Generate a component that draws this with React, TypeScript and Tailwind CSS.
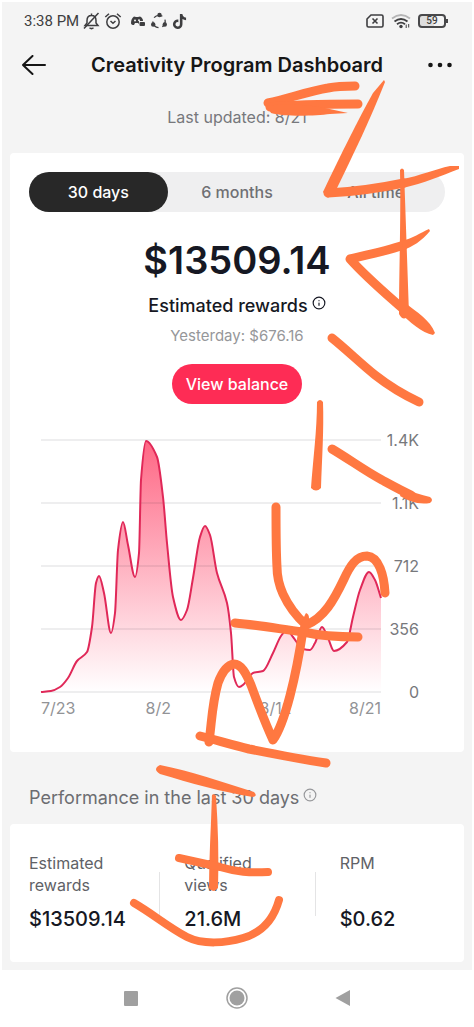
import { Info } from "lucide-react";
import { FaTiktok } from "react-icons/fa";
import { useState } from "react";

type Point = [number, number];

const PERIODS = ["30 days", "6 months", "All time"];
const Y_LABELS = ["1.4K", "1.1K", "712", "356", "0"];

const STATS = [
  { label: "Estimated rewards", value: "$13509.14" },
  { label: "Qualified views", value: "21.6M" },
  { label: "RPM", value: "$0.62" },
];

const CHART_WIDTH = 340;
const CHART_HEIGHT = 252;

const REWARDS: Point[] = [
  [0, 252], [10, 251], [19, 247], [27, 238], [36, 221], [46, 212], [51, 187],
  [55, 143], [58, 136], [63, 153], [70, 193], [74, 173], [77, 110], [82, 82],
  [87, 105], [94, 137], [98, 113], [100, 40], [105, 1], [116, 17], [122, 57],
  [126, 103], [132, 157], [140, 180], [146, 170], [152, 138], [159, 97],
  [164, 86], [169, 95], [176, 133], [186, 163], [190, 193], [193, 237],
  [198, 247], [203, 244], [212, 233], [222, 231], [232, 213], [240, 196],
  [246, 190], [252, 197], [262, 209], [269, 210], [274, 203], [281, 187],
  [287, 198], [293, 211], [306, 202], [312, 177], [319, 150], [328, 132],
  [334, 140], [340, 158],
];

// cubic curve through the points, flat at every peak and valley
function smoothPath(points: Point[]) {
  const last = points.length - 1;
  const slopes = points.map((_, i) => {
    const a = points[Math.max(i - 1, 0)];
    const b = points[i];
    const c = points[Math.min(i + 1, last)];
    if (i === 0 || i === last) return (c[1] - a[1]) / (c[0] - a[0]);
    const before = (b[1] - a[1]) / (b[0] - a[0]);
    const after = (c[1] - b[1]) / (c[0] - b[0]);
    return before * after <= 0 ? 0 : (2 * before * after) / (before + after);
  });
  let d = `M${points[0][0]} ${points[0][1]}`;
  for (let i = 0; i < last; i++) {
    const [x1, y1] = points[i];
    const [x2, y2] = points[i + 1];
    const dx = (x2 - x1) / 3;
    d += ` C${x1 + dx} ${y1 + slopes[i] * dx} ${x2 - dx} ${y2 - slopes[i + 1] * dx} ${x2} ${y2}`;
  }
  return d;
}

function App() {
  return (
    <div className="relative min-h-screen bg-white pt-0.5 font-['Inter','Noto_Sans',sans-serif] text-[#161823]">
      <main className="mx-0.5 bg-[#f4f4f4] px-2 pb-2">
        <StatusBar />
        <Header />
        <p className="mt-[15px] text-center text-base leading-6 text-[#77787c]">
          Last updated: 8/21
        </p>
        <RewardsCard />
        <h2 className="mt-8 flex gap-1 px-[19px] text-lg leading-7 text-[#6c6d71]">
          Performance in the last 30 days
          <Info size={14} className="mt-1 text-[#97989b]" />
        </h2>
        <StatsCard />
      </main>
      <NavigationBar />
      <Scribble />
    </div>
  );
}

function StatusBar() {
  return (
    <div className="flex h-[38px] items-center justify-between pr-4 pl-3.5 font-['Roboto',sans-serif] text-[#3e3e40]">
      <div className="flex items-center gap-1">
        <span className="text-[15px]">3:38 PM</span>
        {/* muted bell */}
        <svg width="17" height="18" viewBox="0 0 17 18" fill="none" stroke="currentColor" strokeWidth="1.5">
          <path d="M2 13.500L4 11V8.500C4 5.500 5.500 3.500 8.500 3.500S13 5.500 13 8.500V11L15 13.500ZM8.500 3.500V1.500" />
          <path d="M6.500 15.800Q8.500 17.500 10.500 15.800M15.500 1L1 16.500" />
        </svg>
        {/* alarm */}
        <svg width="18" height="18" viewBox="0 0 18 18" fill="none" stroke="currentColor" strokeWidth="1.5">
          <circle cx="9" cy="10" r="6.200" />
          <path d="M6.500 9L9 11.300L11.500 9M1.300 5L5 1.800M16.700 5L13 1.800" />
        </svg>
        {/* gamepad */}
        <svg width="16" height="14" viewBox="0 0 16 14" fill="currentColor" className="ml-1">
          <path d="M4 2.500L6 3H8L10 2.500Q13 4 13 7H9V10L8 9H5L4 11Q1 11 1 9Q1 4.500 4 2.500Z" />
          <rect x="9.500" y="8" width="5.500" height="4" rx="1" />
          <circle cx="5" cy="6.500" r="1" fill="#f4f4f4" />
          <circle cx="9" cy="6.300" r="1" fill="#f4f4f4" />
        </svg>
        {/* share ring */}
        <svg width="18" height="18" viewBox="0 0 18 18">
          <circle cx="9" cy="9.500" r="6.200" fill="none" stroke="currentColor" strokeWidth="1.300" strokeDasharray="9 4" strokeDashoffset="3" />
          <circle cx="9.500" cy="3" r="2.200" fill="currentColor" />
          <circle cx="3.200" cy="12.500" r="2.200" fill="currentColor" />
          <circle cx="14.800" cy="12.500" r="2.200" fill="currentColor" />
        </svg>
        <FaTiktok size={15} />
      </div>
      <div className="flex items-center gap-[7px]">
        <svg width="18" height="14" viewBox="0 0 18 14" fill="none" stroke="currentColor" strokeWidth="1.6">
          <path d="M5 1H15.500Q17 1 17 2.500V11.500Q17 13 15.500 13H2.500Q1 13 1 11.500V5Z" />
          <path d="M6.500 4.500L11.500 9.500M11.500 4.500L6.500 9.500" />
        </svg>
        <svg width="20" height="15" viewBox="0 0 20 15" fill="none" strokeWidth="1.800">
          <path d="M1 4.500Q10 -2.500 19 4.500" stroke="#b5b5b6" />
          <path d="M3.500 7.500Q10 2.500 16.500 7.500M6 10.300Q10 7 14 10.300" stroke="currentColor" />
          <circle cx="10" cy="12.500" r="1.700" fill="currentColor" />
          <path d="M15.200 14V10.500M17.700 10V13.500" stroke="currentColor" strokeWidth="1" />
        </svg>
        <div className="flex items-center">
          <span className="flex h-3.5 w-7 items-center justify-center rounded border-2 border-[#48484a] bg-linear-to-r from-[#dedede] from-60% to-[#f4f4f4] to-60% text-[10px] leading-3 font-medium">
            59
          </span>
          <span className="h-1 w-0.5 bg-[#48484a]" />
        </div>
      </div>
    </div>
  );
}

function Header() {
  return (
    <header className="flex h-[50px] items-center justify-between px-3 text-[#161616]">
      <button aria-label="Back">
        <svg width="24" height="20" viewBox="0 0 24 20" fill="none" stroke="currentColor" strokeWidth="2" strokeLinecap="round" strokeLinejoin="round">
          <path d="M23 10H1M10.500 1L1 10L10.500 19" />
        </svg>
      </button>
      <h1 className="text-xl font-semibold whitespace-nowrap">
        Creativity Program Dashboard
      </h1>
      <button aria-label="More options">
        <svg width="24" height="6" viewBox="0 0 24 6" fill="currentColor">
          <circle cx="2.500" cy="3" r="2.300" />
          <circle cx="12" cy="3" r="2.300" />
          <circle cx="21.500" cy="3" r="2.300" />
        </svg>
      </button>
    </header>
  );
}

function RewardsCard() {
  const [period, setPeriod] = useState(PERIODS[0]);
  return (
    <section className="mt-6 rounded bg-white px-[19px] pt-[19px] pb-8">
      <div className="flex rounded-full bg-[#efeff0]">
        {PERIODS.map((item) => (
          <button
            key={item}
            onClick={() => setPeriod(item)}
            className={`h-10 flex-1 rounded-full text-base font-medium ${
              item === period ? "bg-[#282828] text-white" : "text-[#6f7074]"
            }`}
          >
            {item}
          </button>
        ))}
      </div>
      <div className="mt-6 flex flex-col items-center">
        <p className="text-[38px] leading-12 font-semibold">$13509.14</p>
        <p className="mt-2 flex gap-1 text-lg leading-7 font-medium">
          Estimated rewards
          <Info size={14} className="mt-1" />
        </p>
        <p className="mt-1 text-[15px] leading-6 text-[#96979a]">
          Yesterday: $676.16
        </p>
        <button className="mt-4 h-10 rounded-full bg-[#fe2c55] px-3.5 text-base font-medium text-white">
          View balance
        </button>
      </div>
      <RewardsChart />
    </section>
  );
}

function RewardsChart() {
  const line = smoothPath(REWARDS);
  return (
    <div className="mt-6 flex pr-[26px] pl-3 text-base text-[#77787c]">
      <div className="flex-1">
        <div className="h-6" />
        <svg
          viewBox={`0 0 ${CHART_WIDTH} ${CHART_HEIGHT}`}
          preserveAspectRatio="none"
          className="-mt-3 h-[252px] w-full overflow-visible"
        >
          <defs>
            <linearGradient id="rewards" x1="0" y1="0" x2="0" y2="1">
              <stop offset="0" stopColor="#fe2c55" stopOpacity="0.72" />
              <stop offset="1" stopColor="#fe2c55" stopOpacity="0" />
            </linearGradient>
          </defs>
          <path d={`${line} V${CHART_HEIGHT} H0 Z`} fill="url(#rewards)" />
          {Y_LABELS.map((label, i) => (
            <path
              key={label}
              d={`M0 ${i * 63}H${CHART_WIDTH}`}
              stroke="#161823"
              strokeOpacity="0.14"
            />
          ))}
          <path d={line} fill="none" stroke="#e02858" strokeWidth="2" />
        </svg>
        <div className="mt-1 grid grid-cols-[5fr_10fr_10fr_4fr] text-center leading-6 text-[#929396]">
          <span className="text-left">7/23</span>
          <span>8/2</span>
          <span>8/12</span>
          <span className="text-right">8/21</span>
        </div>
      </div>
      <div className="flex h-[276px] w-[38px] flex-col justify-between text-right leading-6">
        {Y_LABELS.map((label) => (
          <span key={label}>{label}</span>
        ))}
      </div>
    </div>
  );
}

function StatsCard() {
  return (
    <section className="mt-3 grid grid-cols-[5fr_5fr_4fr] rounded bg-white py-7 pl-[19px]">
      {STATS.map((stat, i) => (
        <div key={stat.label} className="flex">
          {i > 0 && (
            <span className="mt-5 mr-6 -ml-[25px] h-11 w-px bg-[#e4e4e5]" />
          )}
          <div className="flex flex-col">
            <p className="h-11 w-24 text-base leading-[22px] text-[#606166]">
              {stat.label}
            </p>
            <p className="mt-2 text-xl leading-[30px] font-medium">
              {stat.value}
            </p>
          </div>
        </div>
      ))}
    </section>
  );
}

function NavigationBar() {
  return (
    <nav className="flex h-14 items-center justify-center gap-21 text-[#a0a0a0]">
      <button aria-label="Recent apps">
        <svg width="22" height="22" viewBox="0 0 22 22" fill="currentColor">
          <rect x="4" y="4" width="14" height="15" rx="1" />
        </svg>
      </button>
      <button aria-label="Home">
        <svg width="22" height="22" viewBox="0 0 22 22">
          <circle cx="11" cy="11" r="10" fill="none" stroke="currentColor" strokeWidth="1.500" />
          <circle cx="11" cy="11" r="7.500" fill="currentColor" />
        </svg>
      </button>
      <button aria-label="Back">
        <svg width="22" height="22" viewBox="0 0 22 22" fill="currentColor">
          <path d="M3.500 11L18 3V19Z" />
        </svg>
      </button>
    </nav>
  );
}

// freehand marker drawn over the whole page
function Scribble() {
  return (
    <svg
      viewBox="0 0 474 1027"
      className="pointer-events-none absolute inset-x-0 top-0 w-full"
      fill="none"
      stroke="#ff7841"
      strokeWidth="9"
      strokeLinecap="round"
      strokeLinejoin="round"
    >
      <path d="M268 103C290 98 310 91 328 88C338 86 347 86 355 86" />
      <path d="M270 107C298 104 328 104 358 104" />
      <path d="M267 106C284 103 309 105 325 108L348 113L330 114C315 116 285 117 271 113Z" fill="#ff7841" stroke="none" />
      <path d="M384 80L385 82C370 120 354 153 337 188L328 198L323 192C340 156 358 120 373 93Z" fill="#ff7841" stroke="none" />
      <path d="M328 193C352 192 380 188 404 183" />
      <path d="M402 179C420 176 435 169 450 166L459 166V169C441 176 424 183 403 188Z" fill="#ff7841" stroke="none" />
      <path d="M400 170Q402 167 404 170L409 314Q404 323 399 314C399 270 401 220 400 170Z" fill="#ff7841" stroke="none" />
      <path d="M404 245C386 251 367 255 350 259C366 277 385 293 402 308" />
      <path d="M402 241C413 238 420 233 429 229L430 231C422 241 412 247 403 250Z" fill="#ff7841" stroke="none" />
      <path d="M405 303C417 312 430 320 435 333L433 335C422 333 410 322 399 312Z" fill="#ff7841" stroke="none" />
      <path d="M332 338C347 350 360 363 375 375C389 386 404 395 419 402" />
      <path d="M317 402Q320 398 323 402C324 430 322 458 321 488Q316 493 311 488C313 460 317 430 317 402Z" fill="#ff7841" stroke="none" />
      <path d="M332 449C349 459 365 471 382 480C393 486 402 491 411 495" />
      <path d="M403 487C412 492 421 495 430 497Q434 500 430 503C418 505 409 501 400 496Z" fill="#ff7841" stroke="none" />
      <path d="M276 507C276 533 276 550 277 567C277 577 279 585 283 594C289 607 297 617 306 625C324 618 334 600 344 579C350 566 356 556 367 556C379 557 384 575 385 593" />
      <path d="M235 623C258 625 280 629 303 632C321 636 338 637 358 637" />
      <path d="M209 742C212 720 212 704 218 683C222 672 227 665 234 664C241 664 246 673 251 685C258 704 265 723 273 740C285 723 296 677 303 630" />
      <path d="M298 632C301 626 303 618 306 613Q309 614 309 618L308 634Z" fill="#ff7841" stroke="none" />
      <path d="M200 736C216 740 232 745 249 749C274 754 300 759 326 763" />
      <path d="M160 765C190 771 223 782 254 792Q258 796 253 797C222 792 190 783 160 774Q152 769 160 765Z" fill="#ff7841" stroke="none" />
      <path d="M212 795Q214 793 216 796C218 827 219 857 218 888Q213 894 209 888C209 857 211 827 212 795Z" fill="#ff7841" stroke="none" />
      <path d="M179 858C193 861 206 864 220 867C237 872 249 873 268 872" strokeWidth="8" />
      <path d="M134 903C153 914 168 927 187 937C203 945 226 943 243 938C264 932 274 918 279 900" strokeWidth="8" />
    </svg>
  );
}

export default App;
